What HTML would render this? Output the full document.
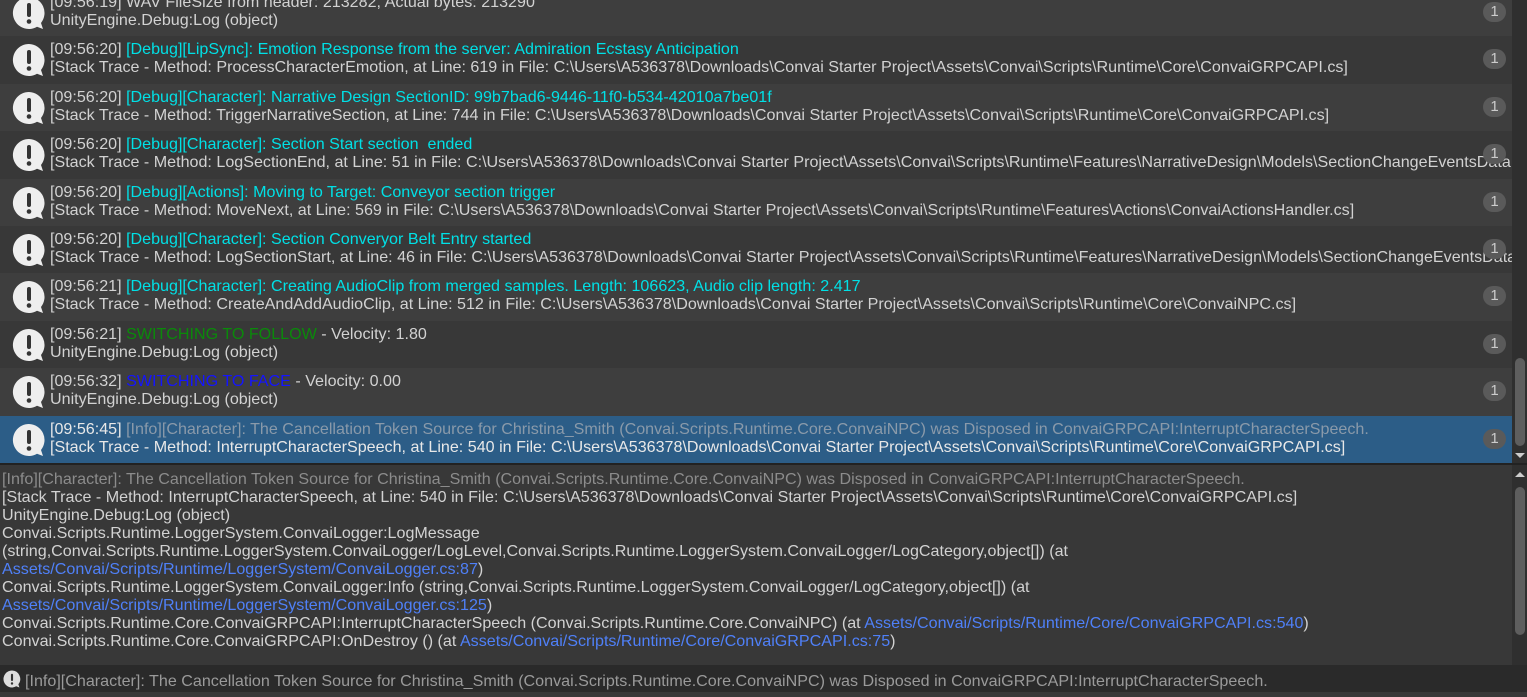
<!DOCTYPE html>
<html><head><meta charset="utf-8"><style>
*{margin:0;padding:0;box-sizing:border-box}
body{width:1527px;height:692px;overflow:hidden;background:#383838;font-family:"Liberation Sans",sans-serif;font-size:16.1px;color:#d2d2d2;position:relative}
.list{position:absolute;left:0;top:0;width:1512px;height:463px;overflow:hidden}
.row{position:absolute;left:0;width:1512px;height:47.4px;white-space:nowrap;overflow:hidden}
.e{background:#3e3e3e}.o{background:#383838}.sel{background:#2c5d87;color:#e8e8e8}
.row svg{position:absolute;left:12px;top:7px}
.t1{position:absolute;left:50px;top:4px;line-height:18px}
.t2{position:absolute;left:50px;top:22px;line-height:18px}
.b{position:absolute;left:1483px;top:13px;width:23px;height:20px;border-radius:10px;background:#5a5a5a;color:#ccc;text-align:center;line-height:20px;font-size:15px}
.c{color:#00e0e6}.g{color:#0a8a0a}.bl{color:#1414ff}.gr{color:#8c8c8c}
.sb{position:absolute;left:1512px;width:15px;background:#2f2f2f}
.th{position:absolute;left:1515px;width:10px;background:#5e5e5e;border-radius:5px}
.det{position:absolute;left:0;top:465px;width:1512px;height:200px;padding:5px 2px;line-height:18px;white-space:nowrap;overflow:hidden}
.lk{color:#4f80f8}
.bar{position:absolute;left:0;top:665px;width:1527px;height:27px;background:#2a2a2a;color:#9a9a9a;line-height:32px;padding-left:25px;white-space:nowrap}
</style></head><body>
<div class="list">
<div class="row e" style="top:-11px"><svg width="34" height="34" viewBox="0 0 34 34"><path d="M17 1a16 16 0 1 0 8 29.8l6 2.2-2-6A16 16 0 0 0 17 1z" fill="#eee"/><rect x="15" y="7" width="4" height="14" rx="2" fill="#333"/><circle cx="17" cy="25.5" r="2.3" fill="#333"/></svg><div class="t1">[09:56:19] WAV FileSize from header: 213282, Actual bytes: 213290</div><div class="t2">UnityEngine.Debug:Log (object)</div><div class="b">1</div></div>
<div class="row o" style="top:36.4px"><svg width="34" height="34" viewBox="0 0 34 34"><path d="M17 1a16 16 0 1 0 8 29.8l6 2.2-2-6A16 16 0 0 0 17 1z" fill="#eee"/><rect x="15" y="7" width="4" height="14" rx="2" fill="#333"/><circle cx="17" cy="25.5" r="2.3" fill="#333"/></svg><div class="t1">[09:56:20] <span class="c">[Debug][LipSync]: Emotion Response from the server: Admiration Ecstasy Anticipation</span></div><div class="t2">[Stack Trace - Method: ProcessCharacterEmotion, at Line: 619 in File: C:\Users\A536378\Downloads\Convai Starter Project\Assets\Convai\Scripts\Runtime\Core\ConvaiGRPCAPI.cs]</div><div class="b">1</div></div>
<div class="row e" style="top:83.8px"><svg width="34" height="34" viewBox="0 0 34 34"><path d="M17 1a16 16 0 1 0 8 29.8l6 2.2-2-6A16 16 0 0 0 17 1z" fill="#eee"/><rect x="15" y="7" width="4" height="14" rx="2" fill="#333"/><circle cx="17" cy="25.5" r="2.3" fill="#333"/></svg><div class="t1">[09:56:20] <span class="c">[Debug][Character]: Narrative Design SectionID: 99b7bad6-9446-11f0-b534-42010a7be01f</span></div><div class="t2">[Stack Trace - Method: TriggerNarrativeSection, at Line: 744 in File: C:\Users\A536378\Downloads\Convai Starter Project\Assets\Convai\Scripts\Runtime\Core\ConvaiGRPCAPI.cs]</div><div class="b">1</div></div>
<div class="row o" style="top:131.2px"><svg width="34" height="34" viewBox="0 0 34 34"><path d="M17 1a16 16 0 1 0 8 29.8l6 2.2-2-6A16 16 0 0 0 17 1z" fill="#eee"/><rect x="15" y="7" width="4" height="14" rx="2" fill="#333"/><circle cx="17" cy="25.5" r="2.3" fill="#333"/></svg><div class="t1">[09:56:20] <span class="c">[Debug][Character]: Section Start section&nbsp; ended</span></div><div class="t2">[Stack Trace - Method: LogSectionEnd, at Line: 51 in File: C:\Users\A536378\Downloads\Convai Starter Project\Assets\Convai\Scripts\Runtime\Features\NarrativeDesign\Models\SectionChangeEventsData</div><div class="b">1</div></div>
<div class="row e" style="top:178.6px"><svg width="34" height="34" viewBox="0 0 34 34"><path d="M17 1a16 16 0 1 0 8 29.8l6 2.2-2-6A16 16 0 0 0 17 1z" fill="#eee"/><rect x="15" y="7" width="4" height="14" rx="2" fill="#333"/><circle cx="17" cy="25.5" r="2.3" fill="#333"/></svg><div class="t1">[09:56:20] <span class="c">[Debug][Actions]: Moving to Target: Conveyor section trigger</span></div><div class="t2">[Stack Trace - Method: MoveNext, at Line: 569 in File: C:\Users\A536378\Downloads\Convai Starter Project\Assets\Convai\Scripts\Runtime\Features\Actions\ConvaiActionsHandler.cs]</div><div class="b">1</div></div>
<div class="row o" style="top:226px"><svg width="34" height="34" viewBox="0 0 34 34"><path d="M17 1a16 16 0 1 0 8 29.8l6 2.2-2-6A16 16 0 0 0 17 1z" fill="#eee"/><rect x="15" y="7" width="4" height="14" rx="2" fill="#333"/><circle cx="17" cy="25.5" r="2.3" fill="#333"/></svg><div class="t1">[09:56:20] <span class="c">[Debug][Character]: Section Converyor Belt Entry started</span></div><div class="t2">[Stack Trace - Method: LogSectionStart, at Line: 46 in File: C:\Users\A536378\Downloads\Convai Starter Project\Assets\Convai\Scripts\Runtime\Features\NarrativeDesign\Models\SectionChangeEventsData</div><div class="b">1</div></div>
<div class="row e" style="top:273.4px"><svg width="34" height="34" viewBox="0 0 34 34"><path d="M17 1a16 16 0 1 0 8 29.8l6 2.2-2-6A16 16 0 0 0 17 1z" fill="#eee"/><rect x="15" y="7" width="4" height="14" rx="2" fill="#333"/><circle cx="17" cy="25.5" r="2.3" fill="#333"/></svg><div class="t1">[09:56:21] <span class="c">[Debug][Character]: Creating AudioClip from merged samples. Length: 106623, Audio clip length: 2.417</span></div><div class="t2">[Stack Trace - Method: CreateAndAddAudioClip, at Line: 512 in File: C:\Users\A536378\Downloads\Convai Starter Project\Assets\Convai\Scripts\Runtime\Core\ConvaiNPC.cs]</div><div class="b">1</div></div>
<div class="row o" style="top:320.8px"><svg width="34" height="34" viewBox="0 0 34 34"><path d="M17 1a16 16 0 1 0 8 29.8l6 2.2-2-6A16 16 0 0 0 17 1z" fill="#eee"/><rect x="15" y="7" width="4" height="14" rx="2" fill="#333"/><circle cx="17" cy="25.5" r="2.3" fill="#333"/></svg><div class="t1">[09:56:21] <span class="g">SWITCHING TO FOLLOW</span> - Velocity: 1.80</div><div class="t2">UnityEngine.Debug:Log (object)</div><div class="b">1</div></div>
<div class="row e" style="top:368.2px"><svg width="34" height="34" viewBox="0 0 34 34"><path d="M17 1a16 16 0 1 0 8 29.8l6 2.2-2-6A16 16 0 0 0 17 1z" fill="#eee"/><rect x="15" y="7" width="4" height="14" rx="2" fill="#333"/><circle cx="17" cy="25.5" r="2.3" fill="#333"/></svg><div class="t1">[09:56:32] <span class="bl">SWITCHING TO FACE</span> - Velocity: 0.00</div><div class="t2">UnityEngine.Debug:Log (object)</div><div class="b">1</div></div>
<div class="row sel" style="top:415.6px"><svg width="34" height="34" viewBox="0 0 34 34"><path d="M17 1a16 16 0 1 0 8 29.8l6 2.2-2-6A16 16 0 0 0 17 1z" fill="#eee"/><rect x="15" y="7" width="4" height="14" rx="2" fill="#333"/><circle cx="17" cy="25.5" r="2.3" fill="#333"/></svg><div class="t1">[09:56:45] <span style="color:#8a9aaa">[Info][Character]: The Cancellation Token Source for Christina_Smith (Convai.Scripts.Runtime.Core.ConvaiNPC) was Disposed in ConvaiGRPCAPI:InterruptCharacterSpeech.</span></div><div class="t2">[Stack Trace - Method: InterruptCharacterSpeech, at Line: 540 in File: C:\Users\A536378\Downloads\Convai Starter Project\Assets\Convai\Scripts\Runtime\Core\ConvaiGRPCAPI.cs]</div><div class="b">1</div></div>
</div>
<div class="sb" style="top:0;height:463px"></div>
<div class="th" style="top:358px;height:88px"></div>
<div style="position:absolute;left:1515px;top:453px;width:0;height:0;border-left:5px solid transparent;border-right:5px solid transparent;border-top:5px solid #ccc"></div>
<div style="position:absolute;left:0;top:463px;width:1527px;height:2px;background:#222"></div>
<div class="det">
<div class="gr">[Info][Character]: The Cancellation Token Source for Christina_Smith (Convai.Scripts.Runtime.Core.ConvaiNPC) was Disposed in ConvaiGRPCAPI:InterruptCharacterSpeech.</div>
<div>[Stack Trace - Method: InterruptCharacterSpeech, at Line: 540 in File: C:\Users\A536378\Downloads\Convai Starter Project\Assets\Convai\Scripts\Runtime\Core\ConvaiGRPCAPI.cs]</div>
<div>UnityEngine.Debug:Log (object)</div>
<div>Convai.Scripts.Runtime.LoggerSystem.ConvaiLogger:LogMessage</div>
<div>(string,Convai.Scripts.Runtime.LoggerSystem.ConvaiLogger/LogLevel,Convai.Scripts.Runtime.LoggerSystem.ConvaiLogger/LogCategory,object[]) (at</div>
<div><span class="lk">Assets/Convai/Scripts/Runtime/LoggerSystem/ConvaiLogger.cs:87</span>)</div>
<div>Convai.Scripts.Runtime.LoggerSystem.ConvaiLogger:Info (string,Convai.Scripts.Runtime.LoggerSystem.ConvaiLogger/LogCategory,object[]) (at</div>
<div><span class="lk">Assets/Convai/Scripts/Runtime/LoggerSystem/ConvaiLogger.cs:125</span>)</div>
<div>Convai.Scripts.Runtime.Core.ConvaiGRPCAPI:InterruptCharacterSpeech (Convai.Scripts.Runtime.Core.ConvaiNPC) (at <span class="lk">Assets/Convai/Scripts/Runtime/Core/ConvaiGRPCAPI.cs:540</span>)</div>
<div>Convai.Scripts.Runtime.Core.ConvaiGRPCAPI:OnDestroy () (at <span class="lk">Assets/Convai/Scripts/Runtime/Core/ConvaiGRPCAPI.cs:75</span>)</div>
</div>
<div class="sb" style="top:465px;height:200px"></div>
<div style="position:absolute;left:1515px;top:472px;width:0;height:0;border-left:5px solid transparent;border-right:5px solid transparent;border-bottom:5px solid #ccc"></div>
<div class="th" style="top:487px;height:148px"></div>
<div class="bar"><svg style="position:absolute;left:3px;top:5px" width="18" height="18" viewBox="0 0 34 34"><path d="M17 1a16 16 0 1 0 8 29.8l6 2.2-2-6A16 16 0 0 0 17 1z" fill="#ddd"/><rect x="15" y="7" width="4" height="14" rx="2" fill="#333"/><circle cx="17" cy="25.5" r="2.3" fill="#333"/></svg>[Info][Character]: The Cancellation Token Source for Christina_Smith (Convai.Scripts.Runtime.Core.ConvaiNPC) was Disposed in ConvaiGRPCAPI:InterruptCharacterSpeech.</div>
</body></html>
